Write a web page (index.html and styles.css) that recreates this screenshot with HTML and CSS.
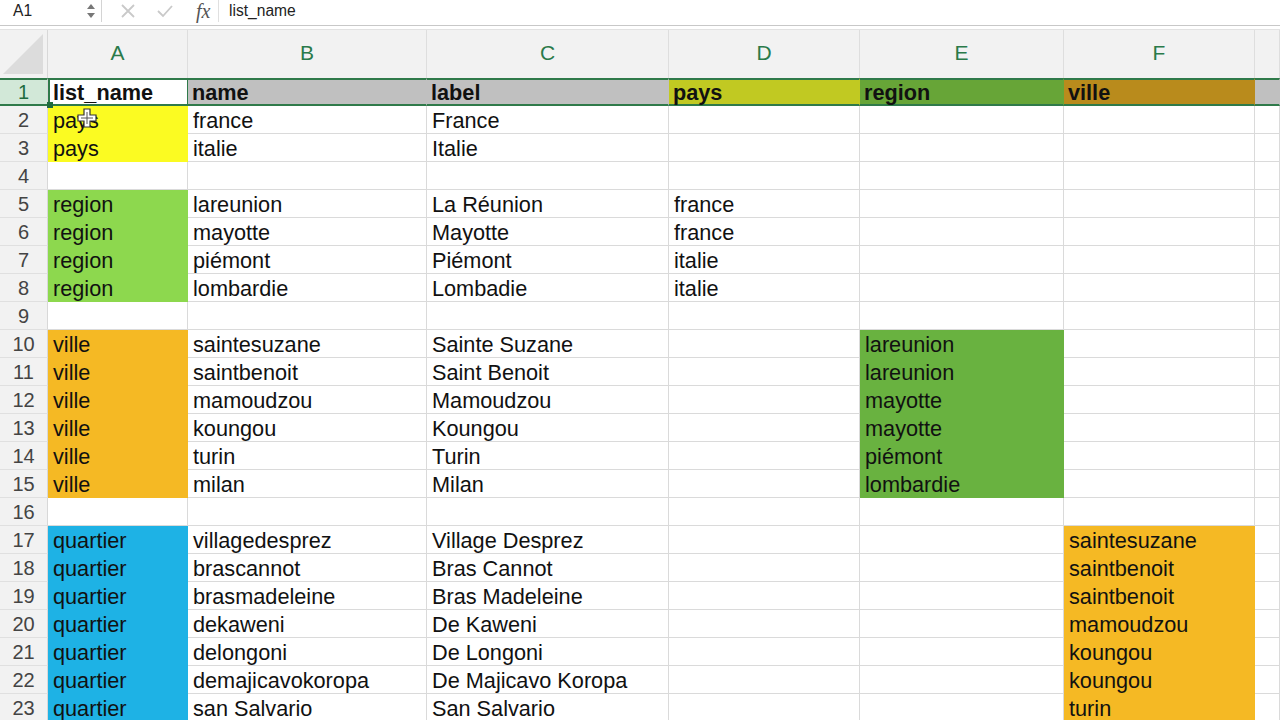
FILE: index.html
```html
<!DOCTYPE html>
<html>
<head>
<meta charset="utf-8">
<link rel="stylesheet" href="styles.css">
</head>
<body>
<div class="fbar">
  <div class="namebox"><span class="ref">A1</span>
    <svg class="spin" width="10" height="20" viewBox="0 0 10 20"><path d="M1 8 L5 3 L9 8 Z" fill="#777"/><path d="M1 12 L5 17 L9 12 Z" fill="#777"/></svg>
  </div>
  <div class="fbtns">
    <svg class="fic" width="16" height="16" viewBox="0 0 16 16"><path d="M2 2 L14 14 M14 2 L2 14" stroke="#c9c9c9" stroke-width="1.8"/></svg>
    <svg class="fic" width="18" height="16" viewBox="0 0 18 16"><path d="M2 8 L7 13 L16 3" stroke="#c9c9c9" stroke-width="1.8" fill="none"/></svg>
    <span class="fx">fx</span>
  </div>
  <div class="formula">list_name</div>
</div>
<div class="sheet">
  <div class="corner"><span class="tri"></span></div>
  <div class="ch">A</div><div class="ch">B</div><div class="ch">C</div><div class="ch">D</div><div class="ch">E</div><div class="ch">F</div><div class="ch"></div>

  <div class="rh sel">1</div>
  <div class="c r1 act">list_name<span class="handle"></span></div><div class="c r1 gr">name</div><div class="c r1 gr">label</div><div class="c r1 d1">pays</div><div class="c r1 e1">region</div><div class="c r1 f1">ville</div><div class="c r1 gr"></div>

  <div class="rh">2</div>
  <div class="c ye">pays</div><div class="c">france</div><div class="c">France</div><div class="c"></div><div class="c"></div><div class="c"></div><div class="c"></div>
  <div class="rh">3</div>
  <div class="c ye">pays</div><div class="c">italie</div><div class="c">Italie</div><div class="c"></div><div class="c"></div><div class="c"></div><div class="c"></div>
  <div class="rh">4</div>
  <div class="c"></div><div class="c"></div><div class="c"></div><div class="c"></div><div class="c"></div><div class="c"></div><div class="c"></div>
  <div class="rh">5</div>
  <div class="c lg">region</div><div class="c">lareunion</div><div class="c">La Réunion</div><div class="c">france</div><div class="c"></div><div class="c"></div><div class="c"></div>
  <div class="rh">6</div>
  <div class="c lg">region</div><div class="c">mayotte</div><div class="c">Mayotte</div><div class="c">france</div><div class="c"></div><div class="c"></div><div class="c"></div>
  <div class="rh">7</div>
  <div class="c lg">region</div><div class="c">piémont</div><div class="c">Piémont</div><div class="c">italie</div><div class="c"></div><div class="c"></div><div class="c"></div>
  <div class="rh">8</div>
  <div class="c lg">region</div><div class="c">lombardie</div><div class="c">Lombadie</div><div class="c">italie</div><div class="c"></div><div class="c"></div><div class="c"></div>
  <div class="rh">9</div>
  <div class="c"></div><div class="c"></div><div class="c"></div><div class="c"></div><div class="c"></div><div class="c"></div><div class="c"></div>
  <div class="rh">10</div>
  <div class="c or">ville</div><div class="c">saintesuzane</div><div class="c">Sainte Suzane</div><div class="c"></div><div class="c dg">lareunion</div><div class="c"></div><div class="c"></div>
  <div class="rh">11</div>
  <div class="c or">ville</div><div class="c">saintbenoit</div><div class="c">Saint Benoit</div><div class="c"></div><div class="c dg">lareunion</div><div class="c"></div><div class="c"></div>
  <div class="rh">12</div>
  <div class="c or">ville</div><div class="c">mamoudzou</div><div class="c">Mamoudzou</div><div class="c"></div><div class="c dg">mayotte</div><div class="c"></div><div class="c"></div>
  <div class="rh">13</div>
  <div class="c or">ville</div><div class="c">koungou</div><div class="c">Koungou</div><div class="c"></div><div class="c dg">mayotte</div><div class="c"></div><div class="c"></div>
  <div class="rh">14</div>
  <div class="c or">ville</div><div class="c">turin</div><div class="c">Turin</div><div class="c"></div><div class="c dg">piémont</div><div class="c"></div><div class="c"></div>
  <div class="rh">15</div>
  <div class="c or">ville</div><div class="c">milan</div><div class="c">Milan</div><div class="c"></div><div class="c dg">lombardie</div><div class="c"></div><div class="c"></div>
  <div class="rh">16</div>
  <div class="c"></div><div class="c"></div><div class="c"></div><div class="c"></div><div class="c"></div><div class="c"></div><div class="c"></div>
  <div class="rh">17</div>
  <div class="c bl">quartier</div><div class="c">villagedesprez</div><div class="c">Village Desprez</div><div class="c"></div><div class="c"></div><div class="c or">saintesuzane</div><div class="c"></div>
  <div class="rh">18</div>
  <div class="c bl">quartier</div><div class="c">brascannot</div><div class="c">Bras Cannot</div><div class="c"></div><div class="c"></div><div class="c or">saintbenoit</div><div class="c"></div>
  <div class="rh">19</div>
  <div class="c bl">quartier</div><div class="c">brasmadeleine</div><div class="c">Bras Madeleine</div><div class="c"></div><div class="c"></div><div class="c or">saintbenoit</div><div class="c"></div>
  <div class="rh">20</div>
  <div class="c bl">quartier</div><div class="c">dekaweni</div><div class="c">De Kaweni</div><div class="c"></div><div class="c"></div><div class="c or">mamoudzou</div><div class="c"></div>
  <div class="rh">21</div>
  <div class="c bl">quartier</div><div class="c">delongoni</div><div class="c">De Longoni</div><div class="c"></div><div class="c"></div><div class="c or">koungou</div><div class="c"></div>
  <div class="rh">22</div>
  <div class="c bl">quartier</div><div class="c">demajicavokoropa</div><div class="c">De Majicavo Koropa</div><div class="c"></div><div class="c"></div><div class="c or">koungou</div><div class="c"></div>
  <div class="rh">23</div>
  <div class="c bl">quartier</div><div class="c">san Salvario</div><div class="c">San Salvario</div><div class="c"></div><div class="c"></div><div class="c or">turin</div><div class="c"></div>
</div>
<svg class="cursor" width="20" height="20" viewBox="0 0 20 20"><path d="M7 1 H13 V7 H19 V13 H13 V19 H7 V13 H1 V7 H7 Z" fill="#fff" stroke="#333" stroke-width="1.2"/><path d="M10 4 V16 M4 10 H16" stroke="#555" stroke-width="1"/></svg>
</body>
</html>
```
FILE: styles.css
```css
html, body {
  margin: 0;
  padding: 0;
  width: 1280px;
  height: 720px;
  overflow: hidden;
  background: #fff;
  font-family: "Liberation Sans", Arial, sans-serif;
  position: relative;
}
.fbar {
  height: 26px;
  display: flex;
  align-items: flex-start;
  border-bottom: 1px solid #c8c8c8;
  background: #fff;
  font-size: 15.6px;
  color: #222;
  box-sizing: border-box;
}
.namebox {
  width: 102px;
  height: 22px;
  display: flex;
  align-items: center;
  justify-content: space-between;
  box-sizing: border-box;
  padding: 0 5px 0 13px;
  border-right: 1px solid #d4d4d4;
}
.fbtns {
  width: 117px;
  height: 22px;
  display: flex;
  align-items: center;
  gap: 20px;
  padding-left: 18px;
  box-sizing: border-box;
  border-right: 1px solid #e0e0e0;
}
.fx {
  font-family: "Liberation Serif", serif;
  font-style: italic;
  font-size: 20px;
  color: #555;
  margin-left: 2px;
}
.formula {
  height: 22px;
  line-height: 21px;
  padding-left: 10px;
}
.sheet {
  margin-top: 3px;
  border-top: 1px solid #e2e2e2;
  display: grid;
  grid-template-columns: 48px 140px 239px 242px 191px 204px 191px 25px;
  grid-template-rows: 48px;
  grid-auto-rows: 28px;
}
.corner {
  background: #f2f2f2;
  border-right: 1px solid #d8d8d8;
  position: relative;
}
.tri {
  position: absolute;
  right: 4px;
  bottom: 4px;
  width: 0;
  height: 0;
  border-left: 40px solid transparent;
  border-bottom: 40px solid #dcdcdc;
}
.ch {
  background: #f2f2f2;
  border-right: 1px solid #dedede;
  color: #2a7a4a;
  font-size: 21px;
  display: flex;
  align-items: center;
  justify-content: center;
  padding-bottom: 2px;
  box-sizing: border-box;
}
.rh {
  background: #f2f2f2;
  border-bottom: 1px solid #e0e0e0;
  border-right: 1px solid #d8d8d8;
  color: #444;
  font-size: 20px;
  display: flex;
  align-items: center;
  justify-content: center;
  box-sizing: border-box;
  padding-top: 1px;
}
.rh.sel {
  background: #d2e8d8;
  color: #1f6b3e;
  border-top: 2px solid #2f7a4a;
  border-bottom: 2px solid #2f7a4a;
  padding-top: 0;
}
.c {
  box-sizing: border-box;
  border-right: 1px solid #dadada;
  border-bottom: 1px solid #dadada;
  font-size: 21.7px;
  line-height: 26px;
  padding-top: 2px;
  padding-left: 5px;
  color: #111;
  white-space: nowrap;
  overflow: hidden;
}
.r1 {
  font-weight: bold;
  border-top: 2px solid #2f7a4a;
  border-bottom: 2px solid #2f7a4a;
  line-height: 25px;
  padding-top: 0;
  padding-left: 4px;
  position: relative;
  overflow: visible;
}
.act {
  border-left: 2px solid #2f7a4a;
  border-right: 1px solid #2f7a4a;
  background: #fff;
  padding-left: 3px;
}
.handle {
  position: absolute;
  left: -3px;
  bottom: -4px;
  width: 6px;
  height: 6px;
  background: #1f6b3e;
}
.gr { background: #c0c0c0; border-right-color: #c0c0c0; }
.d1 { background: #c1c922; border-right-color: #c1c922; }
.e1 { background: #67a537; border-right-color: #67a537; }
.f1 { background: #b98b1c; border-right-color: #b98b1c; }
.ye { background: #fbfb22; border-color: #fbfb22; }
.lg { background: #8dd84e; border-color: #8dd84e; }
.or { background: #f5b924; border-color: #f5b924; }
.bl { background: #1eb2e5; border-color: #1eb2e5; }
.dg { background: #69b240; border-color: #69b240; }
.cursor {
  position: absolute;
  left: 77px;
  top: 108px;
}
```
